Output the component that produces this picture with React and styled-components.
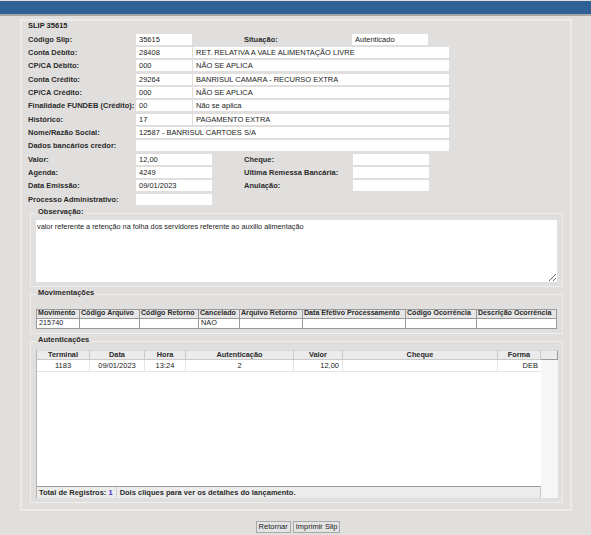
import { createGlobalStyle, styled } from "styled-components";

const GlobalStyle = createGlobalStyle`
  html, body {
    margin: 0;
    padding: 0;
    background: #e1dfdd;
    font-family: "Liberation Sans", Arial, sans-serif;
    color: #222;
  }
`;

const fieldsTop = [
  { label: "Conta Débito:", code: "28408", desc: "RET. RELATIVA A VALE ALIMENTAÇÃO LIVRE" },
  { label: "CP/CA Débito:", code: "000", desc: "NÃO SE APLICA" },
  { label: "Conta Crédito:", code: "29264", desc: "BANRISUL CAMARA - RECURSO EXTRA" },
  { label: "CP/CA Crédito:", code: "000", desc: "NÃO SE APLICA" },
  { label: "Finalidade FUNDEB (Crédito):", code: "00", desc: "Não se aplica" },
  { label: "Histórico:", code: "17", desc: "PAGAMENTO EXTRA" },
];

const pairs = [
  { label: "Valor:", value: "12,00", label2: "Cheque:", value2: "" },
  { label: "Agenda:", value: "4249", label2: "Ultima Remessa Bancária:", value2: "" },
  { label: "Data Emissão:", value: "09/01/2023", label2: "Anulação:", value2: "" },
];

const movCols = [
  { title: "Movimento", w: 43, v: "215740" },
  { title: "Código Arquivo", w: 60, v: "" },
  { title: "Código Retorno", w: 59, v: "" },
  { title: "Cancelado", w: 41, v: "NAO" },
  { title: "Arquivo Retorno", w: 63, v: "" },
  { title: "Data Efetivo Processamento", w: 103, v: "" },
  { title: "Código Ocorrência", w: 71, v: "" },
  { title: "Descrição Ocorrência", w: 80, v: "" },
];

const authCols = [
  { title: "Terminal", w: 53, v: "1183", align: "center" },
  { title: "Data", w: 55, v: "09/01/2023", align: "center" },
  { title: "Hora", w: 41, v: "13:24", align: "center" },
  { title: "Autenticação", w: 108, v: "2", align: "center" },
  { title: "Valor", w: 49, v: "12,00", align: "right" },
  { title: "Cheque", w: 155, v: "", align: "left" },
  { title: "Forma", w: 43, v: "DEB", align: "right" },
];

function Field({ w, value }) {
  return <Input $w={w} readOnly value={value} />;
}

export default function App() {
  return (
    <>
      <GlobalStyle />
      <TopBar />
      <Page>
        <Panel>
          <Title>SLIP 35615</Title>
          <Form>
            <Row>
              <Label>Código Slip:</Label>
              <Field w={56} value="35615" />
              <Label $w={107} $ml={51}>Situação:</Label>
              <Field w={76} value="Autenticado" />
            </Row>
            {fieldsTop.map((f) => (
              <Row key={f.label}>
                <Label>{f.label}</Label>
                <Field w={56} value={f.code} />
                <Field w={256} value={f.desc} />
              </Row>
            ))}
            <Row>
              <Label>Nome/Razão Social:</Label>
              <Field w={313} value="12587 - BANRISUL CARTOES S/A" />
            </Row>
            <Row>
              <Label>Dados bancários credor:</Label>
              <Field w={313} value="" />
            </Row>
            {pairs.map((p) => (
              <Row key={p.label}>
                <Label>{p.label}</Label>
                <Field w={76} value={p.value} />
                <Label $w={108} $ml={31}>{p.label2}</Label>
                <Field w={76} value={p.value2} />
              </Row>
            ))}
            <Row>
              <Label>Processo Administrativo:</Label>
              <Field w={76} value="" />
            </Row>
          </Form>

          <Group $mt={1}>
            <Legend>Observação:</Legend>
            <Note
              readOnly
              value="valor referente a retenção na folha dos servidores referente ao auxilio alimentação"
            />
          </Group>

          <Group $pt={8}>
            <Legend>Movimentações</Legend>
            <MovTable>
              <thead>
                <tr>
                  {movCols.map((c) => (
                    <MovHead key={c.title} style={{ width: c.w }}>
                      {c.title}
                    </MovHead>
                  ))}
                </tr>
              </thead>
              <tbody>
                <tr>
                  {movCols.map((c) => (
                    <MovCell key={c.title}>{c.v}</MovCell>
                  ))}
                </tr>
              </tbody>
            </MovTable>
          </Group>

          <Group $pt={2}>
            <Legend>Autenticações</Legend>
            <Grid>
              <GridHeader>
                {authCols.map((c) => (
                  <HeadCell key={c.title} $w={c.w}>
                    {c.title}
                  </HeadCell>
                ))}
                <HeadCell $w={17} />
              </GridHeader>
              <GridBody>
                <GridMain>
                  <GridRow>
                    {authCols.map((c) => (
                      <DataCell key={c.title} $w={c.w} $align={c.align}>
                        {c.v}
                      </DataCell>
                    ))}
                  </GridRow>
                  <Filler />
                  <Footer>
                    <span>
                      Total de Registros: <Count>1</Count>
                    </span>
                    <Sep />
                    <span>Dois cliques para ver os detalhes do lançamento.</span>
                  </Footer>
                </GridMain>
                <ScrollTrack />
              </GridBody>
            </Grid>
          </Group>
        </Panel>

        <Buttons>
          <Button>Retornar</Button>
          <Button>Imprimir Slip</Button>
        </Buttons>
      </Page>
    </>
  );
}

const TopBar = styled.div`
  margin-top: 1px;
  height: 13px;
  background: #2f6096;
  border-bottom: 2px solid #a7a7a7;
`;

const Page = styled.div`
  padding: 3px 19px 0 20px;
`;

const Panel = styled.div`
  width: 552px;
  box-sizing: border-box;
  border: 2px solid #ecebe9;
  padding: 0 5px 6px 6px;
`;

const Title = styled.div`
  font-size: 7.5px;
  font-weight: bold;
  line-height: 9px;
`;

const Form = styled.div`
  margin-top: 2.5px;
  display: flex;
  flex-direction: column;
`;

const Row = styled.div`
  display: flex;
  align-items: center;
  height: 13.33px;
  gap: 1px;
`;

const Label = styled.div`
  width: ${(p) => (p.$w ? p.$w : 107)}px;
  margin-left: ${(p) => (p.$ml ? p.$ml : 0)}px;
  flex-shrink: 0;
  font-size: 7.5px;
  font-weight: bold;
  color: #2a2a2a;
  white-space: nowrap;
`;

const Input = styled.input`
  width: ${(p) => p.$w}px;
  height: 11px;
  box-sizing: border-box;
  border: none;
  outline: none;
  background: #fff;
  padding: 0 3px;
  margin: 0;
  font-family: "Liberation Sans", Arial, sans-serif;
  font-size: 7.5px;
  color: #222;
`;

const Group = styled.fieldset`
  margin: ${(p) => (p.$mt ? p.$mt : 1)}px 2px 0 2px;
  padding: ${(p) => (p.$pt ? p.$pt : 0)}px 5px 4px 5px;
  border: 1px solid #efeeec;
  min-width: 0;
`;

const Legend = styled.legend`
  padding: 0 2px 4px 2px;
  font-size: 7.5px;
  font-weight: bold;
  line-height: 9px;
  color: #2a2a2a;
`;

const Note = styled.textarea`
  display: block;
  width: 521px;
  height: 62px;
  box-sizing: border-box;
  margin: 0;
  border: none;
  outline: none;
  background: #fff;
  padding: 2px 1px;
  font-family: "Liberation Sans", Arial, sans-serif;
  font-size: 7.3px;
  color: #222;
`;

const MovTable = styled.table`
  width: 520px;
  border-collapse: collapse;
  table-layout: fixed;
`;

const MovHead = styled.th`
  box-sizing: border-box;
  border: 1px solid #9a9a9a;
  background: #e6e6e6;
  height: 9px;
  padding: 0 1px;
  font-size: 7.1px;
  font-weight: bold;
  line-height: 7px;
  text-align: left;
  white-space: nowrap;
  overflow: hidden;
  color: #2a2a2a;
`;

const MovCell = styled.td`
  box-sizing: border-box;
  border: 1px solid #9a9a9a;
  background: #fff;
  height: 10px;
  padding: 0 2px;
  font-size: 7.3px;
  line-height: 8px;
`;

const Grid = styled.div`
  width: 522px;
  height: 148px;
  box-sizing: border-box;
  border-left: 1px solid #b5b5b5;
  display: flex;
  flex-direction: column;
  background: #fff;
`;

const GridHeader = styled.div`
  display: flex;
  height: 10px;
  flex-shrink: 0;
`;

const HeadCell = styled.div`
  width: ${(p) => p.$w}px;
  box-sizing: border-box;
  flex-shrink: 0;
  background: #ebebec;
  border-right: 1px solid #c9c9c9;
  border-bottom: 1px solid #c9c9c9;
  border-top: 1px solid #d8d8d8;
  font-size: 7.3px;
  font-weight: bold;
  line-height: 8px;
  text-align: center;
  color: #2a2a2a;
  &:last-child {
    border-right: 1px solid #9a9a9a;
    border-bottom: 1px solid #9a9a9a;
  }
`;

const GridBody = styled.div`
  flex: 1;
  display: flex;
`;

const GridMain = styled.div`
  flex: 1;
  display: flex;
  flex-direction: column;
`;

const GridRow = styled.div`
  display: flex;
  height: 12px;
`;

const DataCell = styled.div`
  width: ${(p) => p.$w}px;
  box-sizing: border-box;
  flex-shrink: 0;
  border-right: 1px solid #e4e4e4;
  border-bottom: 1px solid #e4e4e4;
  padding: 0 3px;
  font-size: 7.5px;
  line-height: 11px;
  text-align: ${(p) => p.$align};
  color: #222;
  &:last-child {
    border-right: none;
  }
`;

const Filler = styled.div`
  flex: 1;
`;

const Footer = styled.div`
  height: 12px;
  box-sizing: border-box;
  border-top: 1px solid #9c9c9c;
  border-right: 1px solid #c9c9c9;
  background: #ececec;
  display: flex;
  align-items: center;
  padding: 0 2px;
  font-size: 7.5px;
  font-weight: bold;
  color: #2a2a2a;
  white-space: nowrap;
`;

const Count = styled.span`
  color: #4b2fd8;
`;

const Sep = styled.span`
  width: 1px;
  height: 10px;
  background: #cfcfcf;
  margin: 0 3px;
`;

const ScrollTrack = styled.div`
  width: 17px;
  flex-shrink: 0;
  background: #f6f6f6;
`;

const Buttons = styled.div`
  width: 552px;
  display: flex;
  justify-content: center;
  gap: 2px;
  margin-top: 10px;
  padding-left: 4px;
  box-sizing: border-box;
`;

const Button = styled.button`
  height: 12px;
  padding: 0 2px;
  margin: 0;
  border: 1px solid #a9a9a9;
  background: #e4e4e4;
  font-family: "Liberation Sans", Arial, sans-serif;
  font-size: 7.5px;
  color: #222;
  line-height: 9px;
`;
